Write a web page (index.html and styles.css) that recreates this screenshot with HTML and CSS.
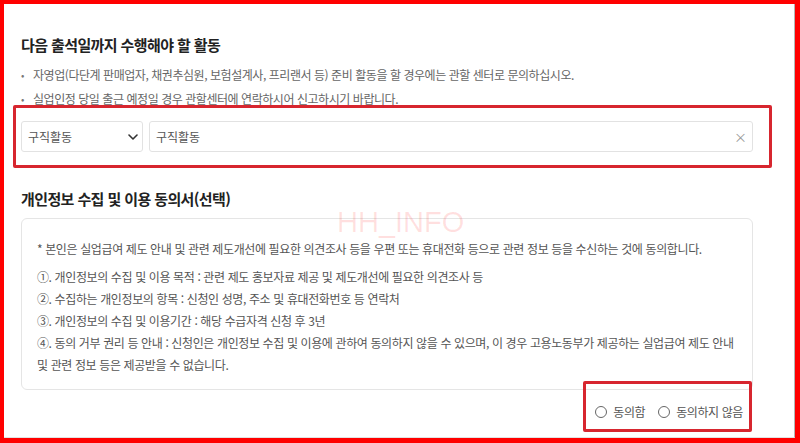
FILE: index.html
```html
<!DOCTYPE html>
<html lang="ko">
<head>
<meta charset="utf-8">
<link rel="stylesheet" href="styles.css">
</head>
<body>
<div class="frame">
  <div class="page">
    <h2 class="title">다음 출석일까지 수행해야 할 활동</h2>
    <ul class="notes">
      <li>자영업(다단계 판매업자, 채권추심원, 보험설계사, 프리랜서 등) 준비 활동을 할 경우에는 관할 센터로 문의하십시오.</li>
      <li>실업인정 당일 출근 예정일 경우 관할센터에 연락하시어 신고하시기 바랍니다.</li>
    </ul>
    <div class="activity-row">
      <div class="select">
        <span>구직활동</span>
        <svg class="chev" width="10" height="6" viewBox="0 0 10 6"><path d="M1 1 L5 5 L9 1" fill="none" stroke="#333" stroke-width="1.6" stroke-linecap="round" stroke-linejoin="round"/></svg>
      </div>
      <div class="input">
        <span>구직활동</span>
        <span class="clear">×</span>
      </div>
    </div>
    <h2 class="title second">개인정보 수집 및 이용 동의서(선택)</h2>
    <div class="consent">
      <p class="lead">* 본인은 실업급여 제도 안내 및 관련 제도개선에 필요한 의견조사 등을 우편 또는 휴대전화 등으로 관련 정보 등을 수신하는 것에 동의합니다.</p>
      <p>①. 개인정보의 수집 및 이용 목적 : 관련 제도 홍보자료 제공 및 제도개선에 필요한 의견조사 등</p>
      <p>②. 수집하는 개인정보의 항목 : 신청인 성명, 주소 및 휴대전화번호 등 연락처</p>
      <p>③. 개인정보의 수집 및 이용기간 : 해당 수급자격 신청 후 3년</p>
      <p>④. 동의 거부 권리 등 안내 : 신청인은 개인정보 수집 및 이용에 관하여 동의하지 않을 수 있으며, 이 경우 고용노동부가 제공하는 실업급여 제도 안내 및 관련 정보 등은 제공받을 수 없습니다.</p>
    </div>
    <div class="radios">
      <label class="radio"><span class="dot"></span>동의함</label>
      <label class="radio"><span class="dot"></span>동의하지 않음</label>
      <div class="mark"></div>
    </div>
    <div class="watermark">HH_INFO</div>
  </div>
</div>
</body>
</html>
```
FILE: styles.css
```css
html, body {
  margin: 0;
  padding: 0;
  background: #fff;
}
body {
  font-family: "Noto Sans CJK KR", "Noto Sans", sans-serif;
  color: #555;
}
.frame {
  width: 800px;
  height: 443px;
  box-sizing: border-box;
  border-top: 4px solid #ff0000;
  border-left: 4px solid #ff0000;
  border-right: 5px solid #ff0000;
  border-bottom: 5px solid #ff0000;
  overflow: hidden;
}
.page {
  position: relative;
  height: 100%;
  box-sizing: border-box;
  padding: 30px 41px 0 17px;
  border-right: 1px solid #b4b4b4;
  border-bottom: 1px solid #e2e2e2;
}
.title {
  margin: 0;
  font-size: 15px;
  line-height: 22px;
  font-weight: 700;
  color: #222;
  letter-spacing: -0.6px;
}
.notes {
  list-style: none;
  margin: 7px 0 0 0;
  padding: 0;
}
.notes li {
  position: relative;
  padding-left: 12px;
  font-size: 12px;
  line-height: 24px;
  color: #666;
  letter-spacing: -0.45px;
}
.notes li::before {
  content: "•";
  position: absolute;
  left: 0;
  top: 0;
  font-size: 10px;
  color: #777;
}
.activity-row {
  display: flex;
  gap: 6px;
  margin: -6px -19px 0 -8px;
  padding: 13px 16px 13px 5px;
  border: 3px solid #d7262f;
  border-radius: 2px;
}
.select, .input {
  height: 31px;
  box-sizing: border-box;
  border: 1px solid #e2e2e2;
  border-radius: 3px;
  display: flex;
  align-items: center;
  justify-content: space-between;
  padding: 0 4px 0 6px;
  font-size: 12px;
  color: #555;
}
.select {
  width: 122px;
}
.input {
  flex: 1;
  padding-right: 5px;
}
.clear {
  font-size: 13px;
  color: #999;
}
.second {
  margin-top: 20px;
}
.consent {
  margin-top: 8px;
  border: 1px solid #e5e5e5;
  border-radius: 6px;
  padding: 19px 15px 12px 15px;
  height: 172px;
  box-sizing: border-box;
}
.consent p {
  margin: 0;
  font-size: 12px;
  line-height: 22px;
  color: #555;
  letter-spacing: -0.38px;
}
.consent p.lead {
  margin-bottom: 6px;
}
.radios {
  position: relative;
  display: flex;
  justify-content: flex-end;
  gap: 13px;
  padding: 11px 10px 0 0;
}
.radio {
  display: flex;
  align-items: center;
  gap: 6px;
  font-size: 12px;
  line-height: 22px;
  color: #555;
  letter-spacing: -0.4px;
}
.dot {
  width: 10px;
  height: 10px;
  border: 1px solid #666;
  border-radius: 50%;
  box-sizing: content-box;
}
.mark {
  position: absolute;
  right: 1px;
  top: -9px;
  width: 163px;
  height: 45px;
  border: 3px solid #d7262f;
  border-radius: 2px;
}
.watermark {
  position: absolute;
  left: 333px;
  top: 201px;
  font-family: "Liberation Sans", sans-serif;
  font-size: 29px;
  line-height: 34px;
  color: rgba(255, 0, 0, 0.12);
  pointer-events: none;
}
```
